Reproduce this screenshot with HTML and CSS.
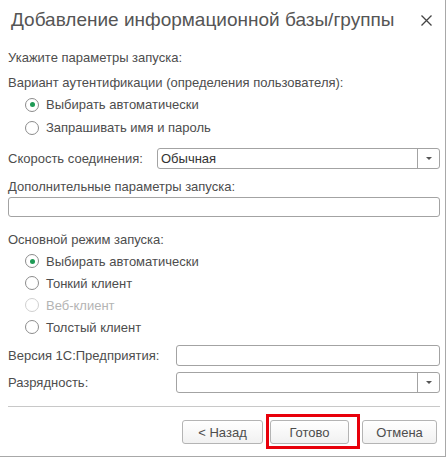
FILE: index.html
```html
<!DOCTYPE html>
<html lang="ru">
<head>
<meta charset="utf-8">
<link rel="stylesheet" href="styles.css">
</head>
<body>
<div class="dialog">
  <div class="header">
    <div class="title">Добавление информационной базы/группы</div>
    <div class="close">
      <svg width="11" height="11" viewBox="0 0 11 11"><path d="M0.5 0.5 L10.5 10.5 M10.5 0.5 L0.5 10.5" stroke="#444" stroke-width="1.3" fill="none"/></svg>
    </div>
  </div>
  <div class="content">
    <div class="text r1">Укажите параметры запуска:</div>
    <div class="text r2">Вариант аутентификации (определения пользователя):</div>
    <div class="radios auth">
      <div class="radio"><span class="circle checked"></span><span>Выбирать автоматически</span></div>
      <div class="radio"><span class="circle"></span><span>Запрашивать имя и пароль</span></div>
    </div>
    <div class="field speed">
      <div class="label lw1">Скорость соединения:</div>
      <div class="combo"><span class="value">Обычная</span><span class="drop"><span class="tri"></span></span></div>
    </div>
    <div class="text r3">Дополнительные параметры запуска:</div>
    <div class="input full"></div>
    <div class="text r4">Основной режим запуска:</div>
    <div class="radios mode">
      <div class="radio"><span class="circle checked"></span><span>Выбирать автоматически</span></div>
      <div class="radio"><span class="circle"></span><span>Тонкий клиент</span></div>
      <div class="radio disabled"><span class="circle"></span><span>Веб-клиент</span></div>
      <div class="radio"><span class="circle"></span><span>Толстый клиент</span></div>
    </div>
    <div class="field ver">
      <div class="label lw2">Версия 1С:Предприятия:</div>
      <div class="input grow"></div>
    </div>
    <div class="field bits">
      <div class="label lw2">Разрядность:</div>
      <div class="combo"><span class="value"></span><span class="drop"><span class="tri"></span></span></div>
    </div>
    <div class="sep"></div>
    <div class="buttons">
      <button class="btn b-back">&lt; Назад</button>
      <span class="mark"><button class="btn b-done">Готово</button></span>
      <button class="btn b-cancel">Отмена</button>
    </div>
  </div>
</div>
</body>
</html>
```
FILE: styles.css
```css
html, body {
  margin: 0;
  padding: 0;
  background: #fff;
}
body {
  font-family: "Liberation Sans", Arial, sans-serif;
  font-size: 13px;
  color: #4d4d4d;
}
.dialog {
  width: 445px;
  height: 456px;
  border-right: 1px solid #a8a8a8;
  border-bottom: 1px solid #a8a8a8;
  background: #fff;
  overflow: hidden;
}
.header {
  height: 40px;
  display: flex;
  align-items: center;
  justify-content: space-between;
}
.title {
  padding-left: 11px;
  font-size: 19px;
  color: #555;
  letter-spacing: 0;
}
.close {
  width: 11px;
  height: 11px;
  margin-right: 13px;
  display: flex;
}
.content {
  padding: 0 5px 0 8px;
}
.text {
  line-height: 16px;
  height: 16px;
}
.r1 { margin-top: 10px; }
.r2 { margin-top: 9px; }
.r3 { margin-top: 10px; }
.r4 { margin-top: 15px; }
.radios {
  padding-left: 17px;
}
.auth { margin-top: 2px; }
.auth .radio { height: 23px; }
.mode { margin-top: 2px; }
.mode .radio { height: 22px; }
.radio {
  display: flex;
  align-items: center;
}
.circle {
  box-sizing: border-box;
  width: 14px;
  height: 14px;
  border: 1px solid #8c8c8c;
  border-radius: 50%;
  margin-right: 7px;
  display: flex;
  align-items: center;
  justify-content: center;
  background: #fff;
}
.circle.checked::after {
  content: "";
  width: 5px;
  height: 5px;
  border-radius: 50%;
  background: #1e9a55;
}
.radio.disabled { color: #b4b4b4; }
.radio.disabled .circle { border-color: #d0d0d0; }
.field {
  display: flex;
  align-items: center;
}
.label {
  flex: none;
}
.lw1 { width: 149px; }
.lw2 { width: 168px; }
.speed { margin-top: 9px; }
.ver { margin-top: 7px; }
.bits { margin-top: 6px; }
.combo, .input {
  box-sizing: border-box;
  height: 21px;
  border: 1px solid #a3a3a3;
  border-radius: 3px;
  background: #fff;
}
.combo {
  flex: 1;
  display: flex;
  align-items: center;
}
.combo .value {
  flex: 1;
  padding-left: 3px;
  color: #333;
}
.drop {
  width: 21px;
  height: 100%;
  border-left: 1px solid #a3a3a3;
  display: flex;
  align-items: center;
  justify-content: center;
}
.tri {
  width: 0;
  height: 0;
  border-left: 3px solid transparent;
  border-right: 3px solid transparent;
  border-top: 3px solid #555;
}
.input.full {
  margin-top: 2px;
  height: 20px;
}
.input.grow { flex: 1; }
.sep {
  margin-top: 13px;
  height: 1px;
  background: #c8c8c8;
}
.buttons {
  margin-top: 13px;
  display: flex;
  justify-content: flex-end;
  padding-right: 3px;
}
.btn {
  box-sizing: border-box;
  height: 24px;
  border: 1px solid #b4b4b4;
  border-radius: 3px;
  background: linear-gradient(#ffffff, #f1f1f1);
  font-family: "Liberation Sans", Arial, sans-serif;
  font-size: 13px;
  color: #4d4d4d;
  padding: 0;
}
.b-back { width: 81px; margin-right: 7px; }
.b-done { width: 79px; }
.b-cancel { width: 75px; margin-left: 13px; }
.mark {
  position: relative;
  display: flex;
}
.mark::after {
  content: "";
  position: absolute;
  left: -4px;
  top: -6px;
  right: -11px;
  bottom: -5px;
  border: 3px solid #e8000b;
  pointer-events: none;
}
```
